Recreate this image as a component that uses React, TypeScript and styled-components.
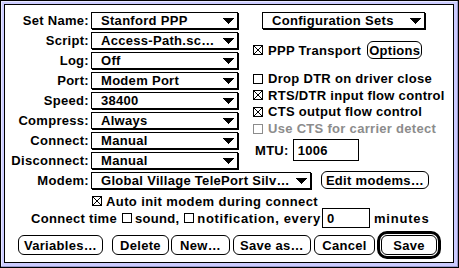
import React from 'react';
import styled, { createGlobalStyle } from 'styled-components';

const GlobalStyle = createGlobalStyle`
  html, body { margin: 0; padding: 0; background: #fff; }
  body {
    font-family: "Liberation Sans", Arial, sans-serif;
    font-weight: 700;
    font-size: 13px;
    letter-spacing: 0.3px;
    color: #000;
  }
  * { box-sizing: border-box; }
`;

const Window = styled.div`
  width: 459px;
  height: 268px;
  border: 1px solid #000;
  background: #ccccff;
  box-shadow: inset -1px -1px 0 #9999cc, inset 1px 1px 0 #e6e6ff;
  padding: 3px 4px 4px 3px;
  display: flex;
`;

const Panel = styled.div`
  flex: 1;
  border: 1px solid #000;
  background: #fff;
  display: flex;
  flex-direction: column;
  padding-top: 7px;
`;

const TopArea = styled.div`
  display: flex;
  align-items: flex-start;
`;

const FieldGrid = styled.div`
  display: grid;
  grid-template-columns: 84px 147px;
  grid-auto-rows: 17px;
  column-gap: 2px;
  row-gap: 3px;
`;

const Label = styled.span`
  text-align: right;
  line-height: 17px;
  white-space: nowrap;
`;

const PopupBox = styled.div<{ $w: number }>`
  width: ${p => p.$w}px;
  height: 17px;
  border: 1px solid #000;
  box-shadow: 1px 1px 0 #000;
  background: #fff;
  display: flex;
  align-items: center;
  gap: 4px;
  padding: 0 3px 0 9px;
`;

const PopupText = styled.span`
  flex: 1;
  white-space: nowrap;
  overflow: hidden;
  line-height: 15px;
`;

const RightCol = styled.div`
  margin-left: 15px;
  display: flex;
  flex-direction: column;
`;

const ConfigWrap = styled.div`
  margin-left: 9px;
`;

const PPPRow = styled.div`
  margin-top: 12px;
  height: 18px;
  display: flex;
  align-items: center;
  gap: 5px;
`;

const CheckList = styled.div`
  margin-top: 11px;
  display: grid;
  grid-template-rows: 17px 16px 17px 17px;
`;

const CheckRow = styled.div<{ $disabled?: boolean }>`
  display: flex;
  align-items: center;
  gap: 5px;
  white-space: nowrap;
  color: ${p => (p.$disabled ? '#8c8c8c' : '#000')};
`;

const MTURow = styled.div`
  margin-top: 2px;
  margin-left: 2px;
  display: flex;
  align-items: center;
  gap: 4px;
`;

const Field = styled.input<{ $w: number; $h: number }>`
  width: ${p => p.$w}px;
  height: ${p => p.$h}px;
  border: 1px solid #000;
  border-radius: 0;
  outline: none;
  background: #fff;
  font: inherit;
  letter-spacing: inherit;
  color: #000;
  padding: 0 4px;
  margin: 0;
`;

const ModemRow = styled.div`
  margin-top: 3px;
  height: 18px;
  display: flex;
  align-items: flex-start;
`;

const ModemLabel = styled(Label)`
  width: 84px;
  margin-right: 2px;
`;

const EditButtonWrap = styled.div`
  margin-left: 10px;
  margin-top: -1px;
`;

const AutoRow = styled.div`
  margin-top: 4px;
  height: 14px;
  padding-left: 87px;
  display: flex;
  align-items: center;
  gap: 4px;
  white-space: nowrap;
  letter-spacing: 0.4px;
`;

const ConnectRow = styled.div`
  height: 20px;
  padding-left: 26px;
  display: flex;
  align-items: center;
  white-space: nowrap;
`;

const Spaced = styled.span<{ $l: number; $ls?: number }>`
  margin-left: ${p => p.$l}px;
  display: inline-flex;
  align-items: center;
  ${p => (p.$ls != null ? `letter-spacing: ${p.$ls}px;` : '')}
`;

const ButtonRow = styled.div`
  margin-top: 3px;
  padding-left: 13px;
  height: 28px;
  display: flex;
  align-items: center;
`;

const Button = styled.button<{ $w: number; $h?: number; $ml?: number }>`
  width: ${p => p.$w}px;
  height: ${p => p.$h ?? 20}px;
  margin-left: ${p => p.$ml ?? 0}px;
  border: 1px solid #000;
  border-radius: 6px;
  background: #fff;
  font: inherit;
  letter-spacing: inherit;
  color: #000;
  padding: 0;
  display: flex;
  align-items: center;
  justify-content: center;
  white-space: nowrap;
  flex: none;
`;

const DefaultRing = styled.span<{ $ml: number }>`
  margin-left: ${p => p.$ml}px;
  display: flex;
  padding: 1px;
  border: 3px solid #000;
  border-radius: 10px;
`;

const BoxEl = styled.span<{ $disabled?: boolean }>`
  width: 10px;
  height: 10px;
  flex: none;
  border: 1px solid ${p => (p.$disabled ? '#8c8c8c' : '#000')};
  background: #fff;
  display: inline-flex;
`;

const Arrow = () => (
  <svg width="11" height="6" viewBox="0 0 11 6" shapeRendering="crispEdges" style={{ flex: 'none' }}>
    <path d="M0 0H11L5.5 6Z" fill="#000" />
  </svg>
);

const Check = ({ checked, disabled }: { checked?: boolean; disabled?: boolean }) => (
  <BoxEl $disabled={disabled}>
    {checked && (
      <svg width="8" height="8" viewBox="0 0 8 8" shapeRendering="crispEdges">
        <path d="M0 0L8 8M8 0L0 8" stroke="#000" strokeWidth="1" />
      </svg>
    )}
  </BoxEl>
);

const Popup = ({ w, children }: { w: number; children: React.ReactNode }) => (
  <PopupBox $w={w}>
    <PopupText>{children}</PopupText>
    <Arrow />
  </PopupBox>
);

const fields: [string, string][] = [
  ['Set Name:', 'Stanford PPP'],
  ['Script:', 'Access-Path.sc…'],
  ['Log:', 'Off'],
  ['Port:', 'Modem Port'],
  ['Speed:', '38400'],
  ['Compress:', 'Always'],
  ['Connect:', 'Manual'],
  ['Disconnect:', 'Manual'],
];

export default function App() {
  return (
    <>
      <GlobalStyle />
      <Window>
        <Panel>
          <TopArea>
            <FieldGrid>
              {fields.map(([l, v]) => (
                <React.Fragment key={l}>
                  <Label>{l}</Label>
                  <Popup w={147}>{v}</Popup>
                </React.Fragment>
              ))}
            </FieldGrid>
            <RightCol>
              <ConfigWrap>
                <Popup w={163}>Configuration Sets</Popup>
              </ConfigWrap>
              <PPPRow>
                <Check checked />
                <span>PPP Transport</span>
                <Button $w={55} $h={18} $ml={1}>Options</Button>
              </PPPRow>
              <CheckList>
                <CheckRow><Check /><span>Drop DTR on driver close</span></CheckRow>
                <CheckRow><Check checked /><span>RTS/DTR input flow control</span></CheckRow>
                <CheckRow><Check checked /><span>CTS output flow control</span></CheckRow>
                <CheckRow $disabled><Check disabled /><span>Use CTS for carrier detect</span></CheckRow>
              </CheckList>
              <MTURow>
                <span>MTU:</span>
                <Field $w={66} $h={22} readOnly defaultValue="1006" />
              </MTURow>
            </RightCol>
          </TopArea>
          <ModemRow>
            <ModemLabel>Modem:</ModemLabel>
            <Popup w={220}>Global Village TelePort Silv…</Popup>
            <EditButtonWrap>
              <Button $w={108} $h={18}>Edit modems…</Button>
            </EditButtonWrap>
          </ModemRow>
          <AutoRow>
            <Check checked />
            <span>Auto init modem during connect</span>
          </AutoRow>
          <ConnectRow>
            <span>Connect time</span>
            <Spaced $l={5}><Check /></Spaced>
            <Spaced $l={3}>sound,</Spaced>
            <Spaced $l={5}><Check /></Spaced>
            <Spaced $l={3} $ls={0.65}>notification, every</Spaced>
            <Spaced $l={1}><Field $w={48} $h={20} readOnly defaultValue="0" /></Spaced>
            <Spaced $l={4} $ls={0.8}>minutes</Spaced>
          </ConnectRow>
          <ButtonRow>
            <Button $w={85}>Variables…</Button>
            <Button $w={57} $ml={9}>Delete</Button>
            <Button $w={59} $ml={2}>New…</Button>
            <Button $w={78} $ml={3}>Save as…</Button>
            <Button $w={61} $ml={3}>Cancel</Button>
            <DefaultRing $ml={2}>
              <Button $w={56}>Save</Button>
            </DefaultRing>
          </ButtonRow>
        </Panel>
      </Window>
    </>
  );
}
